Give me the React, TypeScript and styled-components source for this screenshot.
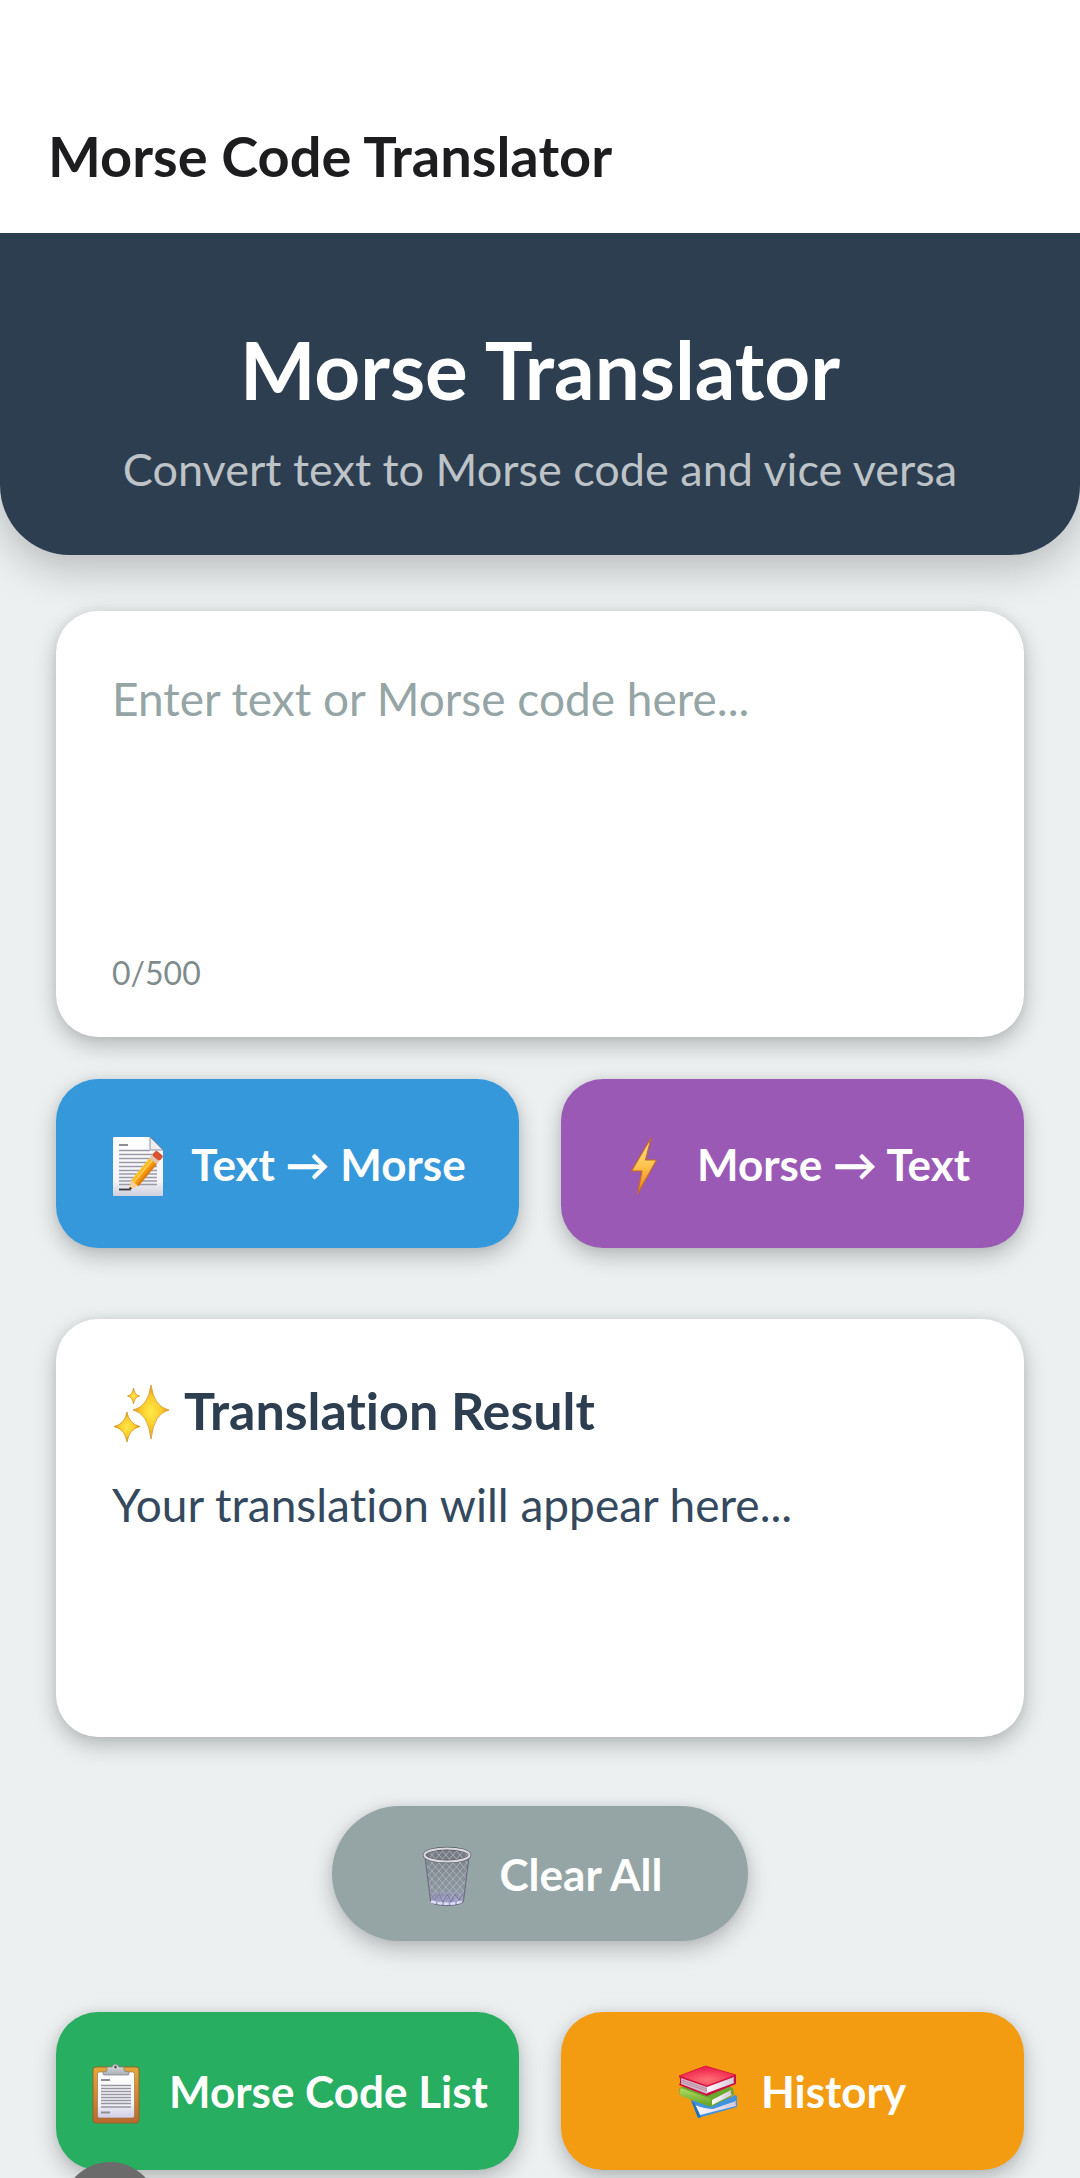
import React, { useState } from "react";
import styled, { createGlobalStyle } from "styled-components";

const GlobalStyle = createGlobalStyle`
  *, *::before, *::after { box-sizing: border-box; }
  body {
    margin: 0;
    background: #ecf0f1;
    font-family: Lato, "Open Sans", sans-serif;
    font-variant-ligatures: none;
  }
  h1, h2, p { margin: 0; }
  button, textarea { font-family: inherit; }
`;

const Page = styled.div`
  min-height: 100vh;
  display: flex;
  flex-direction: column;
  overflow: hidden;
`;

const AppBar = styled.div`
  position: relative;
  z-index: 1;
  display: flex;
  align-items: flex-end;
  padding: 124px 48px 45px;
  background: #ffffff;
`;

const AppTitle = styled.p`
  font-size: 56px;
  line-height: 64px;
  font-weight: 700;
  color: #1d1d1f;
`;

const Hero = styled.header`
  display: flex;
  flex-direction: column;
  align-items: center;
  gap: 24px;
  padding: 88px 40px 58px;
  text-align: center;
  background: #2c3e50;
  border-radius: 0 0 70px 70px;
  box-shadow: 0 12px 44px rgba(0, 0, 0, 0.24);
`;

const HeroTitle = styled.h1`
  font-size: 80px;
  line-height: 96px;
  font-weight: 700;
  color: #ffffff;
`;

const HeroSubtitle = styled.p`
  font-size: 45px;
  line-height: 56px;
  color: #bdc3c7;
`;

const Main = styled.main`
  display: flex;
  flex-direction: column;
  padding: 56px 56px 8px;
`;

const Card = styled.section<{ $minHeight: number }>`
  display: flex;
  flex-direction: column;
  min-height: ${(p) => p.$minHeight}px;
  padding: 56px;
  background: #ffffff;
  border-radius: 42px;
  box-shadow: 0 8px 22px rgba(0, 0, 0, 0.24), 0 0 10px rgba(0, 0, 0, 0.06);
`;

const InputCard = styled(Card)`
  padding-bottom: 42px;
`;

const MessageInput = styled.textarea`
  flex: 1;
  width: 100%;
  padding: 4px 0 0;
  border: 0;
  outline: 0;
  resize: none;
  background: transparent;
  font-size: 46px;
  line-height: 56px;
  color: #2c3e50;

  &::placeholder {
    color: #95a5a6;
    opacity: 1;
  }
`;

const Counter = styled.p`
  font-size: 32px;
  line-height: 44px;
  color: #7f8c8d;
`;

const ButtonRow = styled.div<{ $top: number }>`
  display: grid;
  grid-template-columns: 1fr 1fr;
  gap: 42px;
  margin-top: ${(p) => p.$top}px;
`;

const ActionButton = styled.button<{ $color: string; $height: number }>`
  display: flex;
  align-items: center;
  justify-content: center;
  gap: 24px;
  min-height: ${(p) => p.$height}px;
  padding: 0 20px;
  border: 0;
  border-radius: 42px;
  background: ${(p) => p.$color};
  box-shadow: 0 8px 22px rgba(0, 0, 0, 0.24), 0 0 10px rgba(0, 0, 0, 0.06);
  font-size: 44px;
  line-height: 56px;
  font-weight: 700;
  color: #ffffff;
  white-space: nowrap;
  cursor: pointer;
`;

const ClearButton = styled(ActionButton)`
  align-self: center;
  margin-top: 69px;
  padding: 0 86px;
  border-radius: 70px;
`;

const ResultCard = styled(Card)`
  margin-top: 71px;
  gap: 32px;
`;

const ResultHeading = styled.h2`
  display: flex;
  align-items: center;
  gap: 14px;
  font-size: 52px;
  line-height: 70px;
  font-weight: 700;
  color: #2c3e50;
`;

const ResultText = styled.output`
  font-size: 46px;
  line-height: 56px;
  color: #34495e;
`;

const EmojiSvg = styled.svg`
  flex: none;
  width: 58px;
  height: 66px;
`;

const FloatingHandle = styled.div`
  position: fixed;
  left: 62px;
  bottom: -80px;
  width: 96px;
  height: 96px;
  border-radius: 50%;
  background: #6b6b6b;
`;

function Emoji({ children }: { children: React.ReactNode }) {
  return (
    <EmojiSvg viewBox="0 -6 58 66" aria-hidden="true">
      {children}
    </EmojiSvg>
  );
}

function MemoIcon() {
  return (
    <Emoji>
      <defs>
        <linearGradient id="memoPage" x1="0" y1="0" x2="0" y2="1">
          <stop offset="0" stopColor="#ffffff" />
          <stop offset="0.75" stopColor="#f3f3f8" />
          <stop offset="1" stopColor="#cfcfdd" />
        </linearGradient>
        <linearGradient id="memoPencil" x1="0" y1="0" x2="1" y2="0">
          <stop offset="0" stopColor="#ffc933" />
          <stop offset="0.5" stopColor="#fca311" />
          <stop offset="1" stopColor="#d9720b" />
        </linearGradient>
        <clipPath id="memoClip">
          <rect x="4" y="0" width="50" height="59" />
        </clipPath>
      </defs>
      <path d="M5 0h36l13 13v45a1 1 0 0 1-1 1H5a1 1 0 0 1-1-1V1a1 1 0 0 1 1-1z" fill="url(#memoPage)" />
      <path d="M10 8h9" stroke="#8e8e96" strokeWidth="2" />
      <path
        d="M10 13.500h31M10 17.500h38M10 21.500h38M10 25.500h38M10 29.500h38M10 33.500h38M10 37h38M10 40.500h38M10 44h38M10 47.500h38"
        stroke="#9a9aa6"
        strokeWidth="1.300"
      />
      <path d="M10 52.500h12" stroke="#35353b" strokeWidth="1.800" />
      <path d="M41 0l13 13H42a1 1 0 0 1-1-1z" fill="#ececf2" stroke="#85858f" strokeWidth="0.900" />
      <g clipPath="url(#memoClip)">
        <g transform="translate(20 53) rotate(40)">
          <path d="M0 0L-4.800 -9.500H4.800z" fill="#f7cf94" />
          <path d="M0 0L-1.500 -3H1.500z" fill="#2c2521" />
          <rect x="-4.800" y="-38" width="9.600" height="29" fill="url(#memoPencil)" />
          <path d="M-1.300 -9V-38" stroke="#ffdb70" strokeWidth="1" />
          <rect x="-4.800" y="-41.500" width="9.600" height="4" fill="#e3c3b0" />
          <rect x="-4.800" y="-48" width="9.600" height="6.500" rx="2" fill="#d9532f" />
        </g>
      </g>
    </Emoji>
  );
}

function BoltIcon() {
  return (
    <Emoji>
      <defs>
        <linearGradient id="boltFill" x1="0" y1="0" x2="0" y2="1">
          <stop offset="0" stopColor="#ffe88a" />
          <stop offset="0.5" stopColor="#fdc34e" />
          <stop offset="1" stopColor="#e87a10" />
        </linearGradient>
      </defs>
      <path
        d="M36 1L30.500 23H41.500L22.500 57L27 34H16.500z"
        fill="url(#boltFill)"
        stroke="#c56a21"
        strokeWidth="1.100"
        strokeLinejoin="round"
      />
    </Emoji>
  );
}

function SparklesIcon() {
  return (
    <Emoji>
      <defs>
        <radialGradient id="sparkFill">
          <stop offset="0" stopColor="#ffe94a" />
          <stop offset="0.600" stopColor="#fcc928" />
          <stop offset="1" stopColor="#cf8a18" />
        </radialGradient>
      </defs>
      <g fill="url(#sparkFill)" stroke="#d4951f" strokeWidth="0.800" strokeLinejoin="round">
        <path d="M39 2Q42 24 57 27Q42 30 39 56Q36 30 21 27Q36 24 39 2z" />
        <path d="M15 29Q17 41 28 43.500Q17 46 15 59Q13 46 2 43.500Q13 41 15 29z" />
        <path d="M21.500 5Q22.500 12 27.500 13Q22.500 14 21.500 21Q20.500 14 15.500 13Q20.500 12 21.500 5z" />
      </g>
    </Emoji>
  );
}

function BasketIcon() {
  return (
    <Emoji>
      <defs>
        <pattern id="basketMesh" width="7" height="8" patternUnits="userSpaceOnUse">
          <path d="M0 0L7 8M7 0L0 8" stroke="#b9bcc8" strokeWidth="0.700" />
        </pattern>
        <linearGradient id="basketTint" x1="0" y1="0" x2="0" y2="1">
          <stop offset="0" stopColor="#6f757a" stopOpacity="0.650" />
          <stop offset="0.650" stopColor="#858a98" stopOpacity="0.600" />
          <stop offset="1" stopColor="#a09dd0" />
        </linearGradient>
      </defs>
      <path d="M7 10L12.500 54Q13 58 29 58.500Q45 58 45.500 54L51 10z" fill="url(#basketTint)" />
      <path
        d="M7 10L12.500 54Q13 58 29 58.500Q45 58 45.500 54L51 10z"
        fill="url(#basketMesh)"
        stroke="#676a78"
        strokeWidth="1"
      />
      <path d="M13 47L17 53L21 47L25 55L29 47L33 55L37 47L41 53L45 47" fill="none" stroke="#7773a5" strokeWidth="0.900" />
      <path d="M13 54.500Q29 59 45 54.500" fill="none" stroke="#dedcf6" strokeWidth="2.500" strokeDasharray="5 1.500" />
      <ellipse cx="29" cy="8" rx="22.500" ry="6.500" fill="#777b82" />
      <ellipse cx="29" cy="8" rx="22.500" ry="6.500" fill="url(#basketMesh)" stroke="#55565e" strokeWidth="3.500" />
      <ellipse cx="29" cy="8" rx="22.500" ry="6.500" fill="none" stroke="#d9d9df" strokeWidth="2.200" />
    </Emoji>
  );
}

function ClipboardIcon() {
  return (
    <Emoji>
      <defs>
        <linearGradient id="boardWood" x1="0" y1="0" x2="0" y2="1">
          <stop offset="0" stopColor="#e5a83a" />
          <stop offset="1" stopColor="#b9692f" />
        </linearGradient>
        <linearGradient id="boardPaper" x1="0" y1="0" x2="0" y2="1">
          <stop offset="0" stopColor="#ffffff" />
          <stop offset="0.700" stopColor="#f1f1f7" />
          <stop offset="1" stopColor="#cfcde4" />
        </linearGradient>
        <linearGradient id="boardClip" x1="0" y1="0" x2="0" y2="1">
          <stop offset="0" stopColor="#e2e4e6" />
          <stop offset="1" stopColor="#a9adb1" />
        </linearGradient>
      </defs>
      <rect x="6" y="3" width="46" height="56" rx="3" fill="url(#boardWood)" stroke="#94652a" strokeWidth="1" />
      <rect x="10.500" y="8" width="37" height="46" rx="2" fill="url(#boardPaper)" stroke="#9c6b3b" strokeWidth="0.600" />
      <path d="M14 16h9M14 48.500h9" stroke="#8d8d96" strokeWidth="2" />
      <path
        d="M14 21.500h30M14 24.500h30M14 27.500h30M14 30.500h30M14 33.500h30M14 36.500h30M14 39.500h30M14 43h30"
        stroke="#9696a3"
        strokeWidth="1.500"
      />
      <path
        d="M16 10V8l4-1V4a1 1 0 0 1 1-1h4l1-1.500a3 3 0 0 1 5 0L32 3h4a1 1 0 0 1 1 1v3l5 1v2a1 1 0 0 1-1 1H17a1 1 0 0 1-1-1z"
        fill="url(#boardClip)"
        stroke="#7f8386"
        strokeWidth="0.700"
      />
      <circle cx="28.500" cy="3" r="1.400" fill="#5c5c5c" />
    </Emoji>
  );
}

function BooksIcon() {
  return (
    <Emoji>
      <defs>
        <radialGradient id="bookRed" cx="0.500" cy="0.700" r="0.700">
          <stop offset="0" stopColor="#ff7076" />
          <stop offset="1" stopColor="#ec1646" />
        </radialGradient>
        <linearGradient id="bookGreen" x1="0" y1="0" x2="0" y2="1">
          <stop offset="0" stopColor="#b5dc62" />
          <stop offset="1" stopColor="#5c9e20" />
        </linearGradient>
        <linearGradient id="bookPages" x1="0" y1="0" x2="1" y2="0">
          <stop offset="0" stopColor="#fffaff" />
          <stop offset="1" stopColor="#d5c7d9" />
        </linearGradient>
      </defs>
      <path d="M12 36L35 40L57 31Q59 33 58 36L58 43L19 54z" fill="#3f93e0" />
      <path d="M16 41Q26 45 34 45L57 37Q56 39 57 42L21 51z" fill="url(#bookPages)" />
      <path d="M12 36L19 54L22 53L16 40z" fill="#2470bd" />
      <path d="M1 24L27 14L54 24L55 31L32 43L1 31Q-1 27 1 24z" fill="#69a82a" />
      <path d="M2 24L32 35V43L2 32Q-1 28 2 24z" fill="url(#bookGreen)" />
      <path d="M33 36L52 26Q51 29 53 31L33 41z" fill="url(#bookPages)" />
      <path d="M0 12L1 15V19L0 21L28 32L57 20V11z" fill="#c61244" />
      <path d="M2 14L28 23V30L2 20z" fill="#d9b5c6" />
      <path d="M2 16L28 25M2 18L28 27" stroke="#a58795" strokeWidth="0.800" />
      <path d="M28 23L55 13Q54 16 55 19L28 29z" fill="url(#bookPages)" />
      <path d="M0 12L26.500 2L57 11L28 22z" fill="url(#bookRed)" stroke="#d31041" strokeWidth="0.800" strokeLinejoin="round" />
    </Emoji>
  );
}

const MAX_LENGTH = 500;

const MORSE: Record<string, string> = {
  A: ".-", B: "-...", C: "-.-.", D: "-..", E: ".", F: "..-.", G: "--.", H: "....", I: "..",
  J: ".---", K: "-.-", L: ".-..", M: "--", N: "-.", O: "---", P: ".--.", Q: "--.-", R: ".-.",
  S: "...", T: "-", U: "..-", V: "...-", W: ".--", X: "-..-", Y: "-.--", Z: "--..",
  "0": "-----", "1": ".----", "2": "..---", "3": "...--", "4": "....-", "5": ".....",
  "6": "-....", "7": "--...", "8": "---..", "9": "----.", " ": "/",
};

const toMorse = (text: string) =>
  text.toUpperCase().split("").map((c) => MORSE[c] ?? c).join(" ");

const toText = (code: string) =>
  code.trim().split(/\s+/).map((s) => Object.keys(MORSE).find((k) => MORSE[k] === s) ?? s).join("");

export default function App() {
  const [message, setMessage] = useState("");
  const [result, setResult] = useState("");

  const clear = () => {
    setMessage("");
    setResult("");
  };

  return (
    <Page>
      <GlobalStyle />
      <AppBar>
        <AppTitle>Morse Code Translator</AppTitle>
      </AppBar>
      <Hero>
        <HeroTitle>Morse Translator</HeroTitle>
        <HeroSubtitle>Convert text to Morse code and vice versa</HeroSubtitle>
      </Hero>
      <Main>
        <InputCard $minHeight={426}>
          <MessageInput
            aria-label="Text or Morse code"
            placeholder="Enter text or Morse code here..."
            maxLength={MAX_LENGTH}
            value={message}
            onChange={(e) => setMessage(e.target.value)}
          />
          <Counter>{message.length}/{MAX_LENGTH}</Counter>
        </InputCard>

        <ButtonRow $top={42}>
          <ActionButton $color="#3498db" $height={169} onClick={() => setResult(toMorse(message))}>
            <MemoIcon />
            <span>Text → Morse</span>
          </ActionButton>
          <ActionButton $color="#9b59b6" $height={169} onClick={() => setResult(toText(message))}>
            <BoltIcon />
            <span>Morse → Text</span>
          </ActionButton>
        </ButtonRow>

        <ResultCard $minHeight={418}>
          <ResultHeading>
            <SparklesIcon />
            <span>Translation Result</span>
          </ResultHeading>
          <ResultText>{result || "Your translation will appear here..."}</ResultText>
        </ResultCard>

        <ClearButton $color="#95a5a6" $height={135} onClick={clear}>
          <BasketIcon />
          <span>Clear All</span>
        </ClearButton>

        <ButtonRow $top={71}>
          <ActionButton $color="#27ae60" $height={158}>
            <ClipboardIcon />
            <span>Morse Code List</span>
          </ActionButton>
          <ActionButton $color="#f39c12" $height={158}>
            <BooksIcon />
            <span>History</span>
          </ActionButton>
        </ButtonRow>
      </Main>
      <FloatingHandle />
    </Page>
  );
}
